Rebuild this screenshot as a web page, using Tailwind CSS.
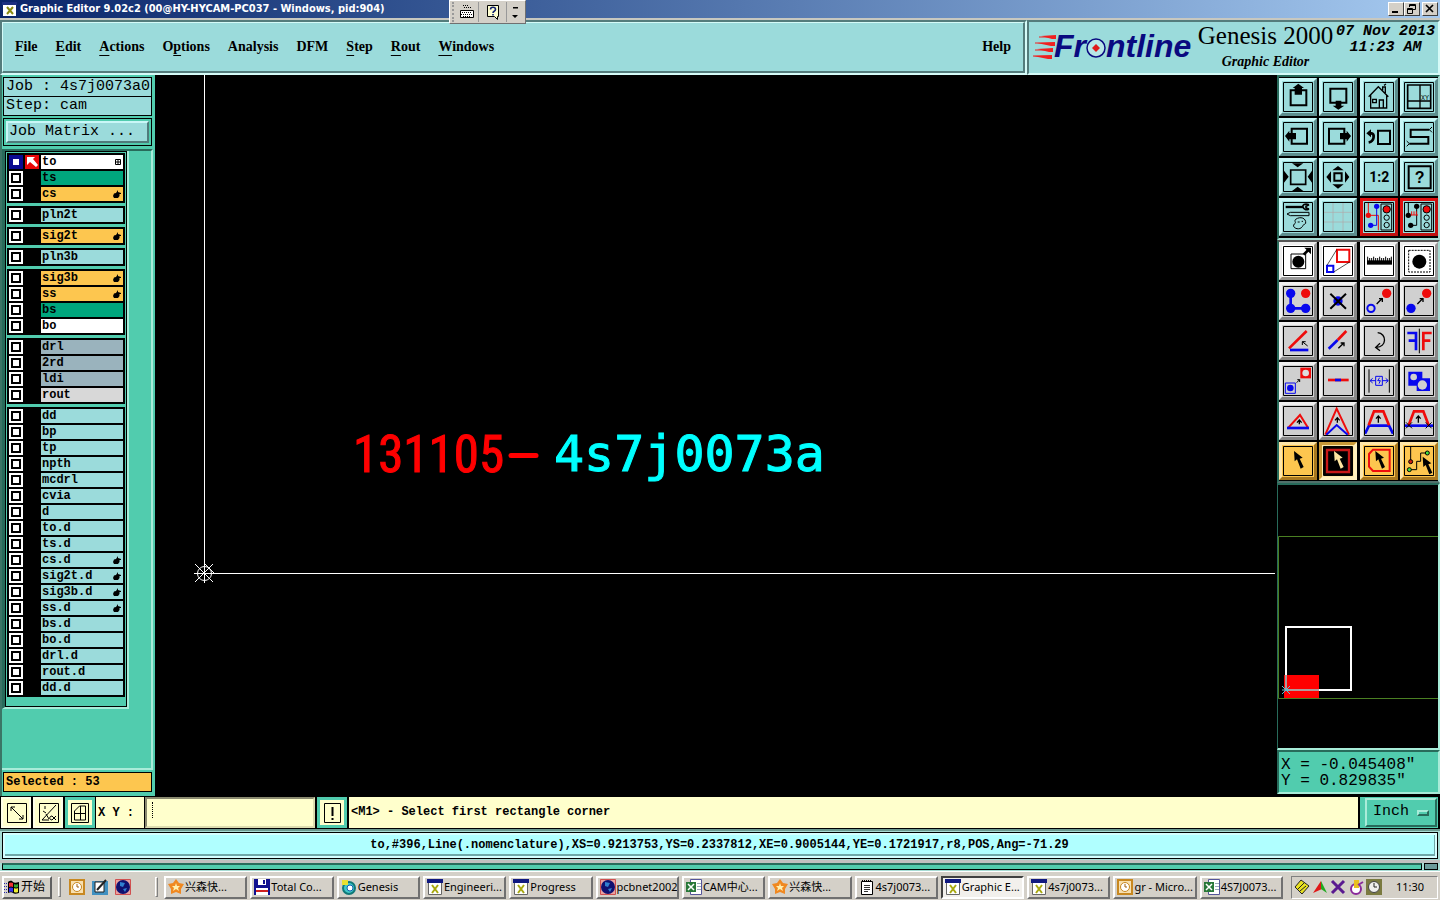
<!DOCTYPE html>
<html lang="en">
<head>
<meta charset="utf-8">
<title>Graphic Editor 9.02c2</title>
<script src="https://cdn.jsdelivr.net/npm/@tailwindcss/browser@4"></script>
</head>
<body class="flex h-screen min-h-[900px] flex-col overflow-hidden bg-black font-['Liberation_Mono','Noto_Sans_CJK_SC',monospace] text-black">

<!-- Window title bar -->
<header class="relative flex h-[18px] shrink-0 items-center gap-[2px] bg-linear-to-r from-[#0a246a] to-[#a6caf0] pr-[2px] pl-[2px]">
  <svg class="size-4" viewBox="0 0 16 16"><path fill="#fff" d="M1 1h13v14H1z"/><path fill="#1c2f80" d="M0 1h15v3H0z"/><path fill="none" stroke="#8b8b10" stroke-width="2" d="M5 6l6 7M11 6l-6 7"/></svg>
  <h1 class="grow font-['DejaVu_Sans_Condensed','DejaVu_Sans',sans-serif] text-[11px] leading-4 font-bold whitespace-nowrap text-white">Graphic Editor 9.02c2 (00@HY-HYCAM-PC037 - Windows, pid:904)</h1>
  <div class="flex">
    <button aria-label="Minimize" class="h-[14px] w-4 border border-t-white border-r-[#404040] border-b-[#404040] border-l-white bg-[#d4d0c8]"><svg class="size-3" viewBox="0 0 12 12"><path d="M3 8h6v2H3z"/></svg></button>
    <button aria-label="Restore" class="mr-[2px] h-[14px] w-4 border border-t-white border-r-[#404040] border-b-[#404040] border-l-white bg-[#d4d0c8]"><svg class="size-3" viewBox="0 0 12 12"><path fill="none" stroke="#000" d="M4.500 4V1.500h6v5H8M2.500 5.500h5v5h-5zM4 2.500h7M2 6.500h6"/></svg></button>
    <button aria-label="Close" class="h-[14px] w-4 border border-t-white border-r-[#404040] border-b-[#404040] border-l-white bg-[#d4d0c8]"><svg class="size-3" viewBox="0 0 12 12"><path fill="none" stroke="#000" stroke-width="1.700" d="M3 2l7 7M10 2l-7 7"/></svg></button>
  </div>
  <!-- Floating language bar -->
  <div class="absolute top-0 left-[449px] z-10 flex h-6 w-[77px] items-center border border-t-white border-r-[#707070] border-b-[#707070] border-l-white bg-[#d4d0c8]">
    <span class="ml-[2px] h-5 w-[3px] border-l-2 border-dotted border-[#999]"></span>
    <button aria-label="Keyboard" class="flex h-5 w-6 items-center justify-center border-r border-[#999]"><svg class="h-[14px] w-4" viewBox="0 0 16 14"><path fill="#fff" stroke="#000" d="M1.500 5.500h13v7h-13z"/><path fill="none" stroke="#000" stroke-dasharray="1 1" d="M3 7.500h10M2 9.500h12M4 11.500h8M5 2.500h7M4 .5h6"/></svg></button>
    <button aria-label="Help" class="flex h-5 w-7 items-center justify-center border-r border-[#999]"><svg class="size-4" viewBox="0 0 16 16"><path fill="#ffffd0" stroke="#000" d="M2.500 1.500h11v11h-1v3l-3-3h-7z"/><path fill="none" stroke="#102070" stroke-width="1.600" d="M5.500 5.500c0-3 5-3 5 0c0 2-2.500 1.500-2.500 3.500M8 10v1.500"/></svg></button>
    <button aria-label="Options" class="flex h-5 w-4 items-center justify-center"><svg class="h-4 w-2" viewBox="0 0 8 16"><path d="M2 3h5v1.500H2zM1 11h6l-3 3z"/></svg></button>
  </div>
</header>

<!-- Menu bar and product banner -->
<div class="flex h-[57px] shrink-0 border-t-2 border-[#c8c8c0] bg-[#c9f4f0]">
  <nav class="flex grow items-center justify-between border-t-2 border-r-2 border-b-2 border-l-2 border-t-[#547c7c] border-r-[#d5fbf8] border-b-[#d5fbf8] border-l-[#547c7c] bg-[#9bdbdb]">
    <div class="flex h-full w-full items-center justify-between border-t border-r-2 border-b-2 border-l border-t-[#d5fbf8] border-r-[#547c7c] border-b-[#547c7c] border-l-[#d5fbf8] pr-3 pb-px pl-3 font-['Liberation_Serif',serif] text-[14px] font-bold">
      <div class="flex gap-[18px]">
        <button><u class="underline-offset-4">F</u>ile</button>
        <button><u class="underline-offset-4">E</u>dit</button>
        <button><u class="underline-offset-4">A</u>ctions</button>
        <button>O<u class="underline-offset-4">p</u>tions</button>
        <button>Analysis</button>
        <button>DFM</button>
        <button><u class="underline-offset-4">S</u>tep</button>
        <button><u class="underline-offset-4">R</u>out</button>
        <button><u class="underline-offset-4">W</u>indows</button>
      </div>
      <button>Help</button>
    </div>
  </nav>
  <section class="flex w-[413px] shrink-0 justify-between border-2 border-t-[#547c7c] border-r-[#d5fbf8] border-b-[#d5fbf8] border-l-[#547c7c] bg-[#9bdbdb] pr-[3px] pl-1">
    <svg class="h-[50px] w-[162px]" viewBox="0 0 162 50" role="img" aria-label="Frontline">
      <g fill="#f02020"><path d="M8 14l15-1v4h-4zM4 21l18-1v4h-4zM4 27l16-1v4h-4zM0 34l19-1v4h-4z"/></g>
      <path stroke="#f02020" d="M6 15h16M2 21h19M2 28h18M0 34h18"/>
      <g fill="#0a0a80" font-family="'Liberation Sans',sans-serif" font-weight="700" font-style="italic" font-size="32"><text x="21" y="35">Fr</text><text x="73" y="35">ntline</text></g>
      <circle cx="63" cy="26" r="9" fill="#b8e6e6" stroke="#0a0a80" stroke-width="1.500"/><path fill="#e01818" d="M63 22l4 4l-4 4l-4-4z"/>
    </svg>
    <div class="flex flex-col items-center font-['Liberation_Serif',serif]">
      <p class="text-[25px] leading-7 font-medium">Genesis 2000</p>
      <p class="text-[14px] leading-6 font-bold italic">Graphic Editor</p>
    </div>
    <p class="pt-[2px] text-center text-[15px] leading-4 font-bold italic">07 Nov 2013<br>11:23 AM</p>
  </section>
</div>

<main class="flex min-h-0 grow">
  <!-- Layer list -->
  <aside class="flex w-[155px] shrink-0 flex-col border-r-2 border-l-2 border-r-[#51ccae] border-l-[#3b7566] bg-[#51ccae] pt-[2px] pb-1">
    <div class="mx-px border border-black bg-[#9bdbdb] pl-[2px] text-[15px] leading-[18px] whitespace-nowrap">Job : 4s7j0073a0</div>
    <div class="mx-px border border-t-0 border-black bg-[#9bdbdb] pl-[2px] text-[15px] leading-[18px]">Step: cam</div>
    <div class="mx-px mt-[2px] border border-black p-[2px]">
      <button class="block w-full border-2 border-t-[#c9f7f7] border-r-[#4f7b7b] border-b-[#4f7b7b] border-l-[#c9f7f7] bg-[#9bdbdb] pl-px text-left text-[15px] leading-[18px]">Job Matrix ...</button>
    </div>
    <div class="mt-[3px] flex grow flex-col border-t-2 border-r-2 border-b-2 border-t-[#286b5b] border-r-[#a8ecd9] border-b-[#a8ecd9]">
      <div class="flex w-[127px] border-r-2 border-b-2 border-l-3 border-r-[#a8ecd9] border-b-[#a8ecd9] border-l-[#286b5b]">
        <div id="layers" class="flex grow flex-col gap-[3px] border border-black p-px pb-[9px] text-[12px] leading-[14px] font-bold"></div>
      </div>
    </div>
    <p class="mx-px mt-[2px] border border-black bg-[#fdc64f] pl-[2px] text-[12px] leading-[18px] font-bold">Selected : 53</p>
  </aside>

  <!-- Drawing canvas -->
  <div class="min-w-0 grow">
    <svg class="h-full w-full" role="img" aria-label="Board drawing">
      <path stroke="#fff" fill="none" d="M49.500 0V508M40 489l18 18M58 489l-18 18M50 489l9 9"/>
      <line x1="39" y1="498.500" x2="100%" y2="498.500" stroke="#fff"/>
      <circle cx="49.500" cy="498.500" r="7" fill="none" stroke="#fff"/>
      <text x="198" y="397" fill="#f00" stroke="#f00" font-size="51" font-family="'Roboto Condensed','Liberation Sans',sans-serif">131105</text>
      <path stroke="#f00" stroke-width="5" stroke-linecap="round" d="M356 380.500h25"/>
      <text x="399" y="396" fill="#0ff" stroke="#0ff" font-size="50" font-family="'DejaVu Sans Mono',monospace">4s7j0073a</text>
    </svg>
  </div>

  <!-- Tool palette, overview and coordinates -->
  <aside class="flex w-[165px] shrink-0 flex-col border-l-2 border-black bg-black">
    <div id="view-tools" class="grid grid-cols-4 gap-[2px] border-t-2 border-r-2 border-b-2 border-l-2 border-t-[#286b5b] border-r-[#a8dcd4] border-b-[#a8dcd4] border-l-[#286b5b] pt-px pb-[2px]"></div>
    <div id="edit-tools" class="grid grid-cols-4 gap-[2px] border-t-2 border-r-2 border-b-2 border-l-2 border-t-[#555] border-r-[#a8dcd4] border-b-[#51706b] border-l-[#286b5b] pb-px"></div>
    <div class="grow border-t-2 border-r-2 border-b-2 border-l border-t-[#286b5b] border-r-[#a8ecd9] border-b-[#a8ecd9] border-l-[#286b5b]">
      <svg class="block h-full w-full" role="img" aria-label="Overview">
        <path fill="none" stroke="#4a7f22" d="M170 51.500H.5V213.500H170"/>
        <path fill="#f00" d="M6 190h35v23H6z"/><path fill="none" stroke="#fff" stroke-width="2" d="M8 142h65v63H8z"/>
        <path fill="none" stroke="#b09a9a" stroke-width="2" d="M8 190v15h33"/><path stroke="#52c8d8" d="M4 201l8 8M12 201l-8 8M4 205h8"/>
      </svg>
    </div>
    <p class="border-t-2 border-r-2 border-b-2 border-l-2 border-t-[#286b5b] border-r-[#a8ecd9] border-b-[#a8ecd9] border-l-[#286b5b] bg-[#51ccae] pt-[5px] pb-[3px] pl-[2px] text-[16px] leading-4">X = -0.045408"<br>Y = 0.829835"</p>
    <div class="h-[2px] shrink-0"></div>
  </aside>
</main>

<!-- Command line -->
<div class="flex h-[33px] shrink-0 gap-[2px] bg-black p-px pr-[2px]">
  <button aria-label="Snap" class="w-[30px] border-2 border-[#ffffe8] bg-[#ffffcc] p-[2px]"><svg class="mx-auto size-6" viewBox="0 0 24 24" fill="none" stroke="#000"><path d="M2.500 2.500h19v19h-19zM6 6l12 12M6 10V6h4M18 14v4h-4"/></svg></button>
  <button aria-label="Angle" class="w-[30px] border-2 border-[#ffffe8] bg-[#ffffcc] p-[2px]"><svg class="mx-auto size-6" viewBox="0 0 24 24" fill="none" stroke="#000"><path d="M2.500 2.500h19v19h-19zM5 19L19 4M6 10l3 2M9 13l3 5M5 19h7M15 15c-3 0-3 4 0 4l4-4M15 15l4 4M8 5v3"/></svg></button>
  <button aria-label="Grid" class="w-[30px] border-3 border-[#51ccae] bg-[#ffffcc]"><svg class="mx-auto size-6" viewBox="0 0 24 24" fill="none" stroke="#000"><path d="M3.500 2.500h17v19h-17zM6.500 19V10l5-5h6v14zM12.500 5v14M6 12.500h12"/></svg></button>
  <label for="xy" class="-mx-px flex w-12 items-center bg-[#ffffcc] pl-[2px] text-[12px] font-bold">X Y :</label>
  <div class="relative w-[170px]">
    <input id="xy" type="text" class="h-full w-full border-2 border-t-[#8a8a70] border-r-[#ddddb0] border-b-[#ddddb0] border-l-[#8a8a70] bg-[#ffffcc] px-1 text-[12px] font-bold">
    <span class="pointer-events-none absolute top-[5px] left-[7px] h-4 border-l border-dotted border-black"></span>
  </div>
  <button aria-label="Message" class="w-[30px] border-3 border-[#51ccae] bg-[#ffffcc]"><svg class="mx-auto size-6" viewBox="0 0 24 24" fill="none" stroke="#000"><path d="M4.500 2.500h16v19h-16z"/><path stroke-width="2" d="M12.500 6v9M12.500 17v2"/></svg></button>
  <p class="flex grow items-center bg-[#ffffcc] pb-px pl-[2px] text-[12px] font-bold">&lt;M1&gt; - Select first rectangle corner</p>
  <div class="w-[78px] bg-[#51ccae] py-px pr-px pl-[5px]">
    <button class="flex h-full w-full items-center justify-between border-2 border-t-[#a8ecd9] border-r-[#286b5b] border-b-[#286b5b] border-l-[#a8ecd9] bg-[#51ccae] px-[6px] text-[15px]">Inch<span class="h-[6px] w-3 border-2 border-t-[#a8ecd9] border-r-[#286b5b] border-b-[#286b5b] border-l-[#a8ecd9]"></span></button>
  </div>
</div>

<!-- Status line -->
<div class="h-[31px] shrink-0 border-t-2 border-[#6b9a90] bg-[#a8dcd4] px-[2px]">
  <p class="mt-px h-[27px] border border-black bg-[#d5ffff] p-[2px]"><span class="block h-full border-r border-b-2 border-[#6fa8a8] bg-[#b0ffff] text-center text-[12px] leading-[21px] font-bold whitespace-nowrap">to,#396,Line(.nomenclature),XS=0.9213753,YS=0.2337812,XE=0.9005144,YE=0.1721917,r8,POS,Ang=-71.29</span></p>
</div>
<div class="flex h-[11px] shrink-0 gap-[2px] border-t-3 border-[#c0c0c0] bg-[#a8dcd4] px-[2px] pb-px">
  <div class="grow border border-t-2 border-black border-t-[#286b5b] bg-[#51ccae]"></div>
  <div class="w-[14px] border border-black bg-[#6b9a9a]"></div>
</div>

<!-- Taskbar -->
<footer class="flex h-[29px] shrink-0 items-center border-t border-white bg-[#d4d0c8] px-[2px] pt-[2px] font-['Noto_Sans','Noto_Sans_CJK_SC',sans-serif] text-[11px]">
  <button class="flex h-[23px] w-[50px] items-center gap-px border-2 border-t-white border-r-[#606060] border-b-[#606060] border-l-white text-[12px] whitespace-nowrap"><svg class="size-4 shrink-0" viewBox="0 0 16 16"><path d="M4 3c3-2 4-1 5 0s3 1 6 0v11c-3 1-5 1-6 0s-3-1-5 0z"/><path fill="#e33" d="M5 4q2-1 4 0v4q-2-1-4 0z"/><path fill="#3a3" d="M10 5q2 1 4 0v3q-2 1-4 0z"/><path fill="#33e" d="M5 9q2-1 4 0v4q-2-1-4 0z"/><path fill="#ee3" d="M10 9q2 1 4 0v4q-2 1-4 0z"/><path stroke="#22a" stroke-dasharray="1 1" d="M0 4.500h4M0 7.500h4M0 10.500h4M0 13.500h4"/></svg>开始</button>
  <span class="ml-[6px] h-5 w-[3px] border border-t-white border-r-[#808080] border-b-[#808080] border-l-white"></span>
  <div id="quick" class="ml-2 flex w-[86px] gap-[7px]"></div>
  <span class="mr-1 h-5 w-[3px] border border-t-white border-r-[#808080] border-b-[#808080] border-l-white"></span>
  <div id="tasks" class="ml-[2px] flex min-w-0 grow gap-[3px]"></div>
  <div class="ml-2 flex h-[23px] w-[147px] shrink-0 items-center gap-[2px] border border-t-[#808080] border-r-white border-b-white border-l-[#808080] pl-[2px]">
    <svg class="size-4" viewBox="0 0 16 16"><path fill="#e8e020" stroke="#222" d="M1 8l6-7l8 6l-7 8z"/><path stroke="#222" d="M4 10l6-6M6 12l6-5"/></svg>
    <svg class="size-4" viewBox="0 0 16 16"><path fill="#e01818" d="M1 14L9 2l1 8z"/><path fill="#2a2" d="M9 2l6 12-6-4z"/></svg>
    <svg class="size-4" viewBox="0 0 16 16"><path stroke="#5a1a90" stroke-width="3" d="M2 2l12 12M14 2L2 14"/></svg>
    <svg class="size-4" viewBox="0 0 16 16"><circle cx="8" cy="10" r="5" fill="#fff" stroke="#8a2a9a" stroke-width="2"/><path fill="#e8c020" d="M6 1h5v8H6z"/><path stroke="#8a2a9a" stroke-width="2" d="M10 6l5-3"/></svg>
    <svg class="size-4" viewBox="0 0 16 16"><path fill="#7a7a40" d="M0 0h16v16H0z"/><circle cx="8" cy="8" r="5.500" fill="#eee" stroke="#444"/><path fill="none" stroke="#222" d="M8 4v4h3"/></svg>
    <time class="ml-3">11:30</time>
  </div>
</footer>

<script>
const hand = '<svg class="ml-auto h-2 w-2" viewBox="0 0 8 8"><path d="M5 0v2l3 1v1H6.500v2L5 8H1L0 6l1-2.500L3 3z"/></svg>';
const gridMark = '<svg class="ml-auto h-[6px] w-[6px]" viewBox="0 0 6 6"><path fill="none" stroke="#000" d="M.5.5h5v5h-5zM3 0v6M0 3h6"/></svg>';
const fill = { w: 'bg-white', g: 'bg-[#00a67d]', o: 'bg-[#fdc64f]', c: 'bg-[#9bdbdb]', b: 'bg-[#9ab3bd]', s: 'bg-[#d8d8d8]' };
const groups = [
  ['to w m', 'ts g', 'cs o h'], ['pln2t c'], ['sig2t o h'], ['pln3b c'],
  ['sig3b o h', 'ss o h', 'bs g', 'bo w'], ['drl b', '2rd b', 'ldi b', 'rout s'],
  ['dd c', 'bp c', 'tp c', 'npth c', 'mcdrl c', 'cvia c', 'd c', 'to.d c', 'ts.d c', 'cs.d c h', 'sig2t.d c h', 'sig3b.d c h', 'ss.d c h', 'bs.d c', 'bo.d c', 'drl.d c', 'rout.d c', 'dd.d c']
];
document.getElementById('layers').innerHTML = groups.map(g =>
  '<ul class="flex flex-col gap-[2px] bg-black p-[2px]">' + g.map(r => {
    const [n, c, mark] = r.split(' ');
    const active = n === 'to';
    return `<li class="flex h-[14px] gap-[2px]"><input type="checkbox" id="layer-${n}" ${active ? 'checked' : ''} class="size-[14px] shrink-0 appearance-none border-2 border-white bg-white shadow-[inset_0_0_0_2px_#000] checked:border-[#0a0a90] checked:shadow-[inset_0_0_0_2px_#0a0a90]"><span class="w-[14px] shrink-0">${active ? '<svg class="size-[14px]" viewBox="0 0 14 14"><path fill="#e80808" d="M0 0h14v14H0z"/><path fill="#fff" d="M2 2h8L8 4l5 6-2 2-6-5-3 3z"/></svg>' : ''}</span><label for="layer-${n}" class="flex grow items-center pr-[2px] pl-px ${fill[c]}">${n}${mark === 'h' ? hand : mark === 'm' ? gridMark : ''}</label></li>`;
  }).join('') + '</ul>').join('');

const tone = {
  c: 'border-t-[#c9f7f7] border-r-[#5d8d8d] border-b-[#5d8d8d] border-l-[#c9f7f7] bg-[#9bdbdb]',
  r: 'border-t-[#e01010] border-r-[#c01010] border-b-[#c01010] border-l-[#e01010] bg-[#9bdbdb]',
  w: 'border-t-[#eeeeee] border-r-[#999999] border-b-[#999999] border-l-[#eeeeee] bg-white',
  g: 'border-t-[#f0f0f0] border-r-[#888888] border-b-[#888888] border-l-[#f0f0f0] bg-[#d0d0d0]',
  o: 'border-t-[#ffe6a8] border-r-[#a87820] border-b-[#a87820] border-l-[#ffe6a8] bg-[#fdc64f]',
  p: 'border-t-[#c89838] border-r-[#fff0c0] border-b-[#fff0c0] border-l-[#c89838] bg-[#ffe9a8]'
};
/* Icons use a 90-unit box; three units are one pixel. */
const L = (d, c = '#000', w = 3, f = 'none') => `<path fill="${f}" stroke="${c}" stroke-width="${w}" d="${d}"/>`;
const F = (d, c = '#000') => `<path fill="${c}" d="${d}"/>`;
const C = (x, y, r, f = '#000', s = 'none', w = 3) => `<circle cx="${x}" cy="${y}" r="${r}" fill="${f}" stroke="${s}" stroke-width="${w}"/>`;
const R = '#ee0c0c', B = '#0808ee';
const up = (x, y, h) => L(`M${x} ${y + h}V${y}M${x - 7} ${y + 8}L${x} ${y}L${x + 7} ${y + 8}`, '#000', 4);
const ne = (x, y) => L(`M${x} ${y}l17-17M${x + 7} ${y - 16}h10v10`, '#000', 4);
const cur = (x, y, c = '#000') => F(`M${x} ${y}l2 31 7-6 11 28 9-5-12-25 9-3z`, c);
const light = C(68, 22, 11, R, '#000') + C(68, 47, 8, 'none', '#000') + C(68, 69, 8, 'none', '#000') + L('M51 6h32v78H51z');
const view = [
  ['Pan up', 'c', L('M23 25h47v45H23z', '#000', 6) + F('M46 5l17 13h-6v20H35V18h-6z')],
  ['Pan down', 'c', L('M22 20h48v42H22z', '#000', 6) + F('M46 83L29 71h9V56h17v15h9z')],
  ['Home', 'c', L('M14 44L43 14l30 30M20 40v38h48V40M26 52h11v10H26zM46 78V54h12v24M56 25V15h8v18M60 10l6-4', '#000', 4)],
  ['Zoom XY', 'c', L('M11 9h69v70H11z', '#000', 5) + L('M48 9v70M11 57h69', '#000', 4) + '<text x="51" y="53" font-size="20" font-family="Liberation Mono,monospace">XY</text>'],
  ['Pan left', 'c', L('M26 20h46v45H26z', '#000', 6) + F('M6 42l13-16v7h20v19H19v7z')],
  ['Pan right', 'c', L('M18 20h46v45H18z', '#000', 6) + F('M84 42L71 26v7H51v19h20v7z')],
  ['Previous view', 'c', L('M42 26h36v40H42z', '#000', 6) + L('M14 34h9c9 2 9 24-9 27', '#000', 8) + F('M7 34l14-12v24z')],
  ['Snake', 'c', L('M76 23H20v22h53v20H16', '#000', 6) + L('M84 15l-8 8 8 8M8 57l8 8-8 8')],
  ['Fit in', 'c', L('M23 24h45v43H23z', '#000', 5) + F('M27 4h34L44 16zM27 87h34L44 74zM3 26l14 18L3 62zM87 26L74 44l13 18z')],
  ['Fit out', 'c', L('M34 34h22v22H34z', '#000', 6) + F('M28 25h34L45 12zM28 67h34L45 80zM24 28v34L10 45zM66 28v34l13-17z')],
  ['Scale', 'c', '<text x="46" y="60" text-anchor="middle" font-size="42" font-weight="700" font-family="Roboto,sans-serif">1:2</text>'],
  ['Query', 'c', L('M14 13h66v66H14z', '#000', 6) + '<text x="47" y="64" text-anchor="middle" font-size="48" font-weight="700" font-family="Liberation Sans,sans-serif">?</text>'],
  ['Settings', 'c', L('M8 15h52', '#000', 7) + L('M78 8c-14-5-20 2-18 7s8 12 18 6M78 8l-9 5v5l9 3', '#000', 5) + L('M12 36l10-5h56v10H22z') + L('M38 52c14-10 32-4 30 12c-3 4-9 4-10 10c-10 14-34 2-24-8c8-4-2-8 4-14zM44 60h6M56 58h4')],
  ['Grid', 'c', L('M30 3v84M60 3v84M3 31h84M3 60h84', '#b0a8a8', 2)],
  ['Nets on', 'r', L('M13 3v37h30v45', R) + C(13, 40, 8, R) + L('M38 13v57H20', B) + C(38, 13, 8, B) + C(20, 70, 8, B) + light],
  ['Nets off', 'r', L('M13 3v37h9M38 13v57H20') + C(13, 40, 8) + C(38, 13, 8) + C(20, 70, 8) + L('M20 39h22M23 39V28M30 39V28M37 39V28', R) + light]
];
const edit = [
  ['Move', 'w', L('M24 24h44v44H24z') + C(46, 47, 18) + L('M62 26l14-14', '#000', 8) + F('M64 5h20v20z')],
  ['Resize', 'w', L('M42 11h37v37H42z', R, 6) + L('M12 59h19v19H12z', B, 6) + L('M12 58l29-47M32 78l48-30', '#000', 2)],
  ['Measure', 'w', F('M9 43h75v13H9z') + L('M11 32v14M17 36v10M23 36v10M29 32v14M35 36v10M41 36v10M47 32v14M53 36v10M59 36v10M65 32v14M71 36v10M77 36v10M82 32v14')],
  ['Select area', 'w', '<path fill="none" stroke="#000" stroke-width="3" stroke-dasharray="6 3" d="M14 13h64v65H14z"/>' + C(46, 47, 21)],
  ['Copy chain', 'g', L('M23 22v45h45', B, 8) + C(23, 22, 14, B) + C(23, 67, 14, B) + C(68, 67, 14, B) + C(68, 22, 14, R)],
  ['Delete', 'g', C(45, 45, 14, B) + L('M22 23l47 45M69 23L22 68', '#000', 6)],
  ['Copy', 'g', C(21, 67, 11, 'none', B, 6) + C(68, 22, 14, R) + ne(38, 54)],
  ['Shift', 'g', C(21, 67, 14, B) + C(68, 22, 14, R) + ne(40, 54)],
  ['Rotate', 'g', L('M18 67L71 15', R, 8) + L('M21 72h55', B, 8) + L('M74 60L58 47M58 57V47h10')],
  ['Rotate line', 'g', L('M17 68l27-26', B, 8) + L('M44 42l26-27', R, 8) + ne(46, 67)],
  ['Turn', 'g', L('M41 20c28 2 28 44-4 44M48 52L35 64l13 10', '#000', 4)],
  ['Mirror', 'g', L('M10 21h26v52M14 44h20', B, 8) + L('M46 8v74') + L('M83 21H58v52M79 44H60', R, 8)],
  ['Replace', 'g', L('M7 51h30v31H7z', B) + C(22, 66, 10, B) + F('M52 5h32v32H52z', R) + C(68, 21, 10, '#ddd') + L('M41 50l9-9M43 41h7v7')],
  ['Trim', 'g', L('M15 42h62', R, 8) + L('M36 42h18', B, 8)],
  ['Spacing', 'g', L('M15 10v70M76 10v70') + L('M35 31h20v27H35zM35 44H19M55 44h17M26 37l-8 7 8 7M65 37l8 7-8 7M47 35l-6 9h8l-4 9', B)],
  ['Merge', 'g', F('M13 17h42v20h23v38H38V59H13z', B) + C(29, 33, 10, '#d0d0d0') + C(55, 57, 14, '#d0d0d0')],
  ['Raise', 'g', L('M16 65L51 27l24 38', R, 6) + L('M12 66h66', B, 8) + up(49, 42, 13)],
  ['Peak', 'g', L('M7 86L41 8l37 78', R, 6) + L('M10 86l31-29 33 29', B, 6) + up(43, 35, 15)],
  ['Stretch', 'g', L('M3 83l12-24h60l12 24', B, 8) + L('M14 58l16-42h28l17 42', R, 8) + up(43, 30, 20)],
  ['Stretch line', 'g', L('M3 59h84', B, 8) + L('M14 58l16-42h28l16 42', R, 8) + up(43, 30, 20) + L('M6 49l18 18M24 49L6 67M65 49l18 18M83 49L65 67')],
  ['Select', 'o', cur(33, 15)],
  ['Select rectangle', 'p', F('M3 3h84v84H3z') + L('M12 12h66v66H12z', '#c81818', 7) + cur(33, 15, '#ffe6a0')],
  ['Select polygon', 'o', L('M27 11h50v64H27L15 62V24z', R, 6) + cur(34, 15)],
  ['Select net', 'o', L('M20 3v45M16 71h22V46h12V21h20') + C(20, 47, 6, '#d02010', '#000') + C(16, 71, 6, '#40e040', '#000') + C(70, 21, 6, '#40e040', '#000') + cur(56, 32)]
];
const tool = ([n, t, s]) => `<button aria-label="${n}" title="${n}" class="size-[38px] border-3 p-px ${tone[t]}"><svg class="block size-[30px]" viewBox="0 0 90 90">${s}<path fill="none" stroke="#000" stroke-width="3" d="M1.500 1.500h87v87h-87z"/></svg></button>`;
document.getElementById('view-tools').innerHTML = view.map(tool).join('');
document.getElementById('edit-tools').innerHTML = edit.map(tool).join('');

const ico = {
  star: '<path fill="#f08820" d="M8 0l3 4 5 1-3 5v5l-5-2-5 2v-5L0 5l5-1z"/><path fill="#fff0b0" d="M8 4l1 3h3l-2 2 1 3-3-2-3 2 1-3-2-2h3z"/>',
  disk: '<path fill="#101090" d="M0 0h16v16H0z"/><path fill="#fff" d="M4 0h8v6H4zM2 9h12v7H2z"/><path fill="#101090" d="M9 1h2v4H9z"/><path fill="#d02020" d="M2 11h12v2H2z"/>',
  gen: '<circle cx="8" cy="9" r="6" fill="#40c8c8" stroke="#107878" stroke-width="2"/><circle cx="9" cy="9" r="3" fill="#fff" stroke="#1060b0"/><path fill="#e8e030" d="M1 1h6v5H1z"/>',
  x: '<path fill="#fff" stroke="#666" d="M1.500 1.500h13v14h-13z"/><path fill="#101880" d="M0 0h16v4H0z"/><path stroke="#a8a810" stroke-width="2" d="M5 6l6 8M11 6l-6 8"/>',
  globe: '<path fill="#e8a0a0" stroke="#d05050" d="M.5.5h15v15H.5z"/><circle cx="8" cy="8" r="7" fill="#101070"/><path fill="#3080d0" d="M5 3l5 1-2 4-3-1zM8 10l4-1-2 4z"/>',
  xls: '<path fill="#fff" stroke="#559" d="M4.500.5h11v15h-11z"/><path fill="#287838" d="M0 3h10v10H0z"/><path stroke="#fff" stroke-width="1.500" d="M2 5l6 6M8 5l-6 6"/><path stroke="#9ab" d="M11 4.500h4M11 7.500h4M11 10.500h4"/>',
  note: '<path fill="#fff" stroke="#000" d="M2.500 2.500h11v13h-11z"/><path stroke="#000" stroke-dasharray="1 1" stroke-width="2" d="M3 2h10"/><path stroke="#333" d="M5 6.500h6M5 8.500h6M5 10.500h6M5 12.500h4"/>',
  clock: '<path fill="#f8e0b0" stroke="#c88820" stroke-width="2" d="M1 1h14v14H1z"/><circle cx="8" cy="8" r="4.500" fill="#fff" stroke="#c88820"/><path fill="none" stroke="#a06010" d="M8 5v3h2"/>',
  pen: '<path fill="#4090c0" d="M0 2h16v14H0z"/><path fill="#fff" stroke="#222" d="M3 3h9v10H3z"/><path stroke="#222" stroke-width="2" d="M5 11l9-10"/>'
};
const icon = k => `<svg class="size-4 shrink-0" viewBox="0 0 16 16">${ico[k]}</svg>`;
document.getElementById('quick').innerHTML = [['clock', 'Outlook'], ['pen', 'Desktop'], ['globe', 'Browser']].map(([k, n]) => `<button aria-label="${n}">${icon(k)}</button>`).join('');
document.getElementById('tasks').innerHTML = [
  ['star', '兴森快...'], ['disk', 'Total Co...'], ['gen', 'Genesis'], ['x', 'Engineeri...'], ['x', 'Progress'], ['globe', 'pcbnet2002'], ['xls', 'CAM中心...'],
  ['star', '兴森快...'], ['note', '4s7j0073...'], ['x', 'Graphic E...', 1], ['x', '4s7j0073...'], ['clock', 'gr - Micro...'], ['xls', '4S7J0073...']
].map(([k, n, on]) => `<button class="flex h-[23px] min-w-0 flex-1 items-center gap-px overflow-hidden border-2 pl-[2px] whitespace-nowrap ${on ? 'border-t-[#404040] border-r-white border-b-white border-l-[#404040] bg-[#f2f0ec]' : 'border-t-white border-r-[#707070] border-b-[#707070] border-l-white'}">${icon(k)}${n}</button>`).join('');
</script>
</body>
</html>
